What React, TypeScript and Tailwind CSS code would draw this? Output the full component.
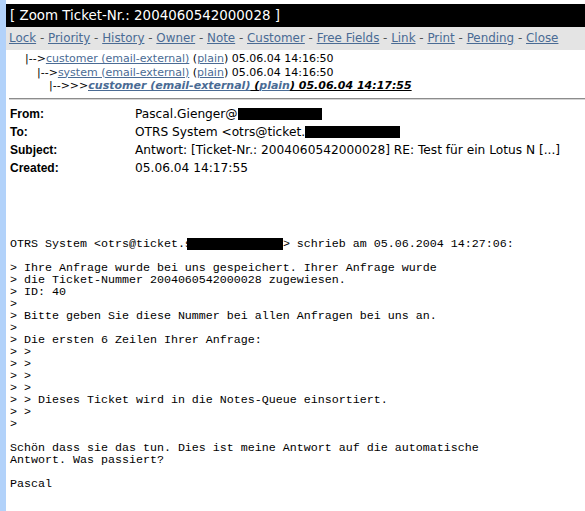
const sans = "font-['DejaVu_Sans',sans-serif]"
const linkCls = 'text-[#4a6b94] underline'

const navItems = [
  'Lock',
  'Priority',
  'History',
  'Owner',
  'Note',
  'Customer',
  'Free Fields',
  'Link',
  'Print',
  'Pending',
  'Close'
]

function Redacted({ w, className = '' }: { w: number; className?: string }) {
  return <span className={`inline-block h-[12px] bg-black align-middle ${className}`} style={{ width: w }} />
}

export default function App() {
  return (
    <div className="flex min-h-[511px] bg-white">
      <div className="w-[6px] shrink-0 bg-[#b2d2fa]" />
      <div className="flex-1 pt-[4px]">
        {/* title */}
        <div className={`h-[23px] bg-black pl-[4px] text-[13.4px] leading-[23px] text-white ${sans}`}>
          [ Zoom Ticket-Nr.: 2004060542000028 ]
        </div>

        {/* nav */}
        <div className={`h-[23px] bg-[#e4e4e4] pl-[3px] text-[11.9px] leading-[23px] text-[#555] ${sans}`}>
          {navItems.map((item, i) => (
            <span key={item}>
              {i > 0 && ' - '}
              <a className={linkCls}>{item}</a>
            </span>
          ))}
        </div>

        {/* article tree */}
        <div className={`pt-[2px] text-[11px] leading-[13.5px] text-black ${sans}`}>
          <div className="pl-[19px]">
            |--&gt;<a className={linkCls}>customer (email-external)</a> (<a className={linkCls}>plain</a>) 05.06.04 14:16:50
          </div>
          <div className="pl-[31px]">
            |--&gt;<a className={linkCls}>system (email-external)</a> (<a className={linkCls}>plain</a>) 05.06.04 14:16:50
          </div>
          <div className="pl-[43px]">
            |--&gt;&gt;&gt;
            <span className="font-bold italic underline">
              <a className="text-[#4a6b94]">customer (email-external)</a> (<a className="text-[#4a6b94]">plain</a>) 05.06.04 14:17:55
            </span>
          </div>
        </div>

        <div className="ml-[3px] mt-[5px] border-t border-b border-t-[#8c8c8c] border-b-[#d4d4d4]" />

        {/* header table */}
        <div className={`mt-[5px] pl-[4px] text-[12.2px] leading-[18px] text-black ${sans}`}>
          {[
            ['From:', <>Pascal.Gienger@<Redacted w={84} /></>],
            ['To:', <>OTRS System &lt;otrs@ticket.<Redacted w={95} /></>],
            ['Subject:', 'Antwort: [Ticket-Nr.: 2004060542000028] RE: Test für ein Lotus N [...]'],
            ['Created:', '05.06.04 14:17:55']
          ].map(([label, value], i) => (
            <div key={i} className="flex">
              <div className="w-[125px] shrink-0 font-['Liberation_Sans',sans-serif] text-[12px] font-bold">{label}</div>
              <div className="whitespace-nowrap">{value}</div>
            </div>
          ))}
        </div>

        {/* body */}
        <pre className="mt-[61px] pl-[4px] font-['Liberation_Mono',monospace] text-[11.67px] leading-[12px] text-black">
          OTRS System &lt;otrs@ticket.s<Redacted w={96} className="-ml-[5px]" />&gt; schrieb am 05.06.2004 14:27:06:
          {'\n\n'}
          {`> Ihre Anfrage wurde bei uns gespeichert. Ihrer Anfrage wurde
> die Ticket-Nummer 2004060542000028 zugewiesen.
> ID: 40
>
> Bitte geben Sie diese Nummer bei allen Anfragen bei uns an.
>
> Die ersten 6 Zeilen Ihrer Anfrage:
> >
> >
> >
> >
> > Dieses Ticket wird in die Notes-Queue einsortiert.
> >
>

Schön dass sie das tun. Dies ist meine Antwort auf die automatische
Antwort. Was passiert?

Pascal`}
        </pre>
      </div>
    </div>
  )
}
